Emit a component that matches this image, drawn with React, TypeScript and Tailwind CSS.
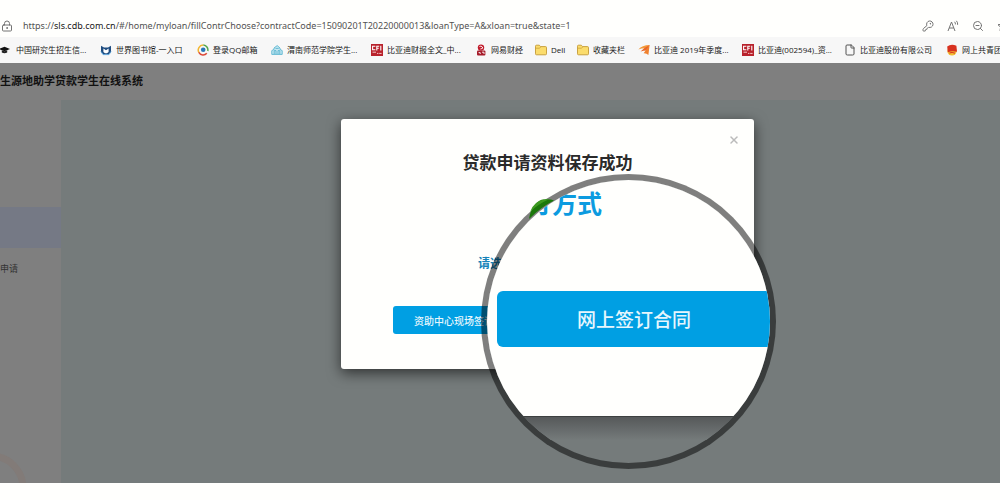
import React from "react";
import { LockKeyhole, KeyRound, ZoomOut, File, X } from "lucide-react";

const FolderIcon = () => (
  <svg viewBox="0 0 12 12" className="size-3 shrink-0" aria-hidden="true">
    <path d="M.5 2.2Q.5 1.2 1.5 1.2H4.3L5.6 2.6H10.5Q11.5 2.6 11.5 3.6V9.8Q11.5 10.8 10.5 10.8H1.5Q.5 10.8.5 9.8Z" fill="#fbdc6c" stroke="#c49a34" strokeWidth=".9" />
    <path d="M1 4.2H4.6L5.8 2.8" fill="none" stroke="#c49a34" strokeWidth=".7" />
  </svg>
);

const CfiIcon = () => (
  <svg viewBox="0 0 12 12" className="size-3 shrink-0" aria-hidden="true">
    <rect width="12" height="12" fill="#b8222c" />
    <path d="M4.4 2.2H1.6V5.8H4.4M5.8 6.4V2.2H8.2M5.8 4.2H7.8M9.8 1.8V6.4" fill="none" stroke="#fff" strokeWidth="1.1" />
    <path d="M1.5 8.2H5M6 9.4H7.4M8.2 9.4H10.6" stroke="#f3c7c8" strokeWidth="1" />
  </svg>
);

const WolfIcon = () => (
  <svg viewBox="0 0 12 12" className="size-3 shrink-0" aria-hidden="true">
    <path d="M1 1.8 4 3.4H8L11 1.8V8.2L8.6 10.4H3.4L1 8.2Z" fill="#1e4c80" />
    <path d="M3.4 4.4 6 6.2 8.6 4.4V8L7 9.2H5L3.4 8Z" fill="#fff" />
    <path d="M1 7.4 3 10.6H9L11 7.4" fill="none" stroke="#62a7dc" strokeWidth="1" />
  </svg>
);

const MailIcon = () => (
  <svg viewBox="0 0 12 12" className="size-3 shrink-0" aria-hidden="true">
    <path d="M2 8.6A4.9 4.9 0 0 1 6.4 1.1" fill="none" stroke="#f2b632" strokeWidth="1.5" />
    <path d="M6.4 1.1A4.9 4.9 0 0 1 10.8 7" fill="none" stroke="#57a84e" strokeWidth="1.5" />
    <path d="M1.8 8.4A4.9 4.9 0 0 0 9.8 9.2" fill="none" stroke="#dc4938" strokeWidth="1.5" />
    <circle cx="6.2" cy="5.8" r="2.3" fill="#2878b8" />
  </svg>
);

const CampusIcon = () => (
  <svg viewBox="0 0 12 12" className="size-3 shrink-0" aria-hidden="true">
    <path d="M.8 10.4V6.6L3 5.4V4L6.2 1.6 9 4V5.4L11.2 6.6V10.4Z" fill="#c7e8f2" stroke="#58b4cf" strokeWidth=".9" />
    <path d="M3.2 10V6.6H5V10M7 10V6.6H8.8V10M4.5 4.4H7.7" fill="none" stroke="#58b4cf" strokeWidth=".9" />
  </svg>
);

const NeteaseIcon = () => (
  <svg viewBox="0 0 12 12" className="size-3 shrink-0" aria-hidden="true">
    <circle cx="6" cy="3.6" r="3.2" fill="#c11b2b" />
    <rect x="2" y="6.4" width="8.4" height="5" rx="1" fill="#a61c2a" />
    <path d="M4.4 2.6Q6 1.4 7.4 3T5.4 5M3.6 8.6H5.2V10M7 8.2H9V10" fill="none" stroke="#fff" strokeWidth=".9" />
  </svg>
);

const SwiftIcon = () => (
  <svg viewBox="0 0 12 12" className="size-3 shrink-0" aria-hidden="true">
    <path d="M.4 5.4Q4 1.2 11.6 1L8.2 4.4Q4 4.2.4 5.4Z" fill="#f39a3a" />
    <path d="M2.6 7.6Q6 3.6 11.6 1L9 6.4Q6 6.2 2.6 7.6Z" fill="#e9662a" />
    <path d="M5.6 9.2 11.6 1 10.4 11Q8.6 9 5.6 9.2Z" fill="#f0812e" />
  </svg>
);

const LeagueIcon = () => (
  <svg viewBox="0 0 12 12" className="size-3 shrink-0" aria-hidden="true">
    <circle cx="6" cy="7" r="4.6" fill="#f3bd32" />
    <path d="M1.2 2.6Q5-.4 10.4 1.8L11 7.8Q6.4 6.4 1.8 8.2Z" fill="#d8311f" />
    <path d="M3.4 9Q6 7.8 9 9.2" fill="none" stroke="#d8311f" strokeWidth="1" />
  </svg>
);

const CapIcon = () => (
  <svg viewBox="0 0 12 12" className="size-3 shrink-0" aria-hidden="true">
    <path d="M-1 5 4.5 2.8 10 5 4.5 7.2Z" fill="#111" />
    <path d="M1.8 6.2V8.4Q4.5 10 7.2 8.4V6.2L4.5 7.2Z" fill="#222" />
  </svg>
);

const bookmarks = [
  { label: "中国研究生招生信...", icon: <CapIcon />, box: "w-[100px]" },
  { label: "世界图书馆-一入口", icon: <WolfIcon />, box: "w-[97px]" },
  { label: "登录QQ邮箱", icon: <MailIcon />, box: "w-[74px]" },
  { label: "渭南师范学院学生...", icon: <CampusIcon />, box: "w-[100px]" },
  { label: "比亚迪财报全文_中...", icon: <CfiIcon />, box: "w-[104px]" },
  { label: "网易财经", icon: <NeteaseIcon />, box: "w-[60px]" },
  { label: "Dell", icon: <FolderIcon />, box: "w-[42px]" },
  { label: "收藏夹栏", icon: <FolderIcon />, box: "w-[61px]" },
  { label: "比亚迪 2019年季度...", icon: <SwiftIcon />, box: "w-[104px]" },
  { label: "比亚迪(002594)_资...", icon: <CfiIcon />, box: "w-[102px]" },
  { label: "比亚迪股份有限公司", icon: <File className="size-3 shrink-0 text-neutral-600" />, box: "w-[102px]" },
  { label: "网上共青团", icon: <LeagueIcon />, box: "w-[72px]" },
];

function BrowserBar() {
  return (
    <header className="shrink-0 bg-[#fffffd]">
      <div className="flex h-[37px] items-end justify-between overflow-hidden pb-[3px] text-neutral-500">
        <div className="flex h-4 items-center">
          <LockKeyhole className="ml-px size-3" />
          <span className="ml-[10px] font-[Noto_Sans,sans-serif] text-[9px] leading-4 whitespace-nowrap text-neutral-600">
            https://<span className="text-neutral-900">sls.cdb.com.cn</span>
            /#/home/myloan/fillContrChoose?contractCode=15090201T20220000013&amp;loanType=A&amp;xloan=true&amp;state=1
          </span>
        </div>
        <div className="-mr-[9px] flex h-4 items-center gap-[13px]">
          <button aria-label="密码" className="shrink-0"><KeyRound className="size-3" /></button>
          <button aria-label="朗读此页内容" className="shrink-0">
            <svg viewBox="0 0 12 12" className="size-3" fill="none" stroke="currentColor" aria-hidden="true">
              <path d="M1 11 4.5 2 8 11M2.2 8H6.8M7.6 1.8Q8.6 3 8.4 4.4M9.4.8Q11 2.6 10.6 4.8" />
            </svg>
          </button>
          <button aria-label="缩小" className="shrink-0"><ZoomOut className="size-3" /></button>
          <button aria-label="收藏" className="shrink-0">
            <svg viewBox="0 0 12 12" className="size-3" fill="none" stroke="currentColor" aria-hidden="true">
              <path d="M6 1 7.5 4.3 11 4.7 8.4 7.2 9 10.8 6 9 3 10.8 3.6 7.2 1 4.7 4.5 4.3Z" />
            </svg>
          </button>
        </div>
      </div>
      <nav className="flex h-[26px] items-center overflow-hidden bg-[#f7f7f7] font-[Open_Sans,Noto_Sans_CJK_SC,sans-serif] text-[8px] text-neutral-900">
        {bookmarks.map((b) => (
          <a key={b.label} href="#" className={`flex shrink-0 items-center gap-1 whitespace-nowrap ${b.box}`}>
            {b.icon}
            {b.label}
          </a>
        ))}
      </nav>
    </header>
  );
}

function Lens() {
  return (
    <>
      <div className="absolute top-[55px] left-[140px] size-[295px] overflow-hidden rounded-full border-6 border-black/50 bg-[#757b7b] bg-clip-padding">
        <div className="flex h-[236px] flex-col bg-[#fffffd]">
          <p className="mt-[6px] ml-10 text-[25px] leading-8 font-bold whitespace-nowrap text-[#0c9be0]">订方式</p>
          <button className="mt-[73px] ml-[10px] h-14 w-[360px] rounded-md bg-[#009fe3] pl-20 text-left text-[19px] font-medium text-[#e6f6fd]">
            网上签订合同
          </button>
        </div>
        <div className="h-6 border-t border-[#3d4040] bg-linear-to-b from-[#56595a] to-[#757b7b]" />
      </div>
      <svg viewBox="0 0 26 20" className="absolute top-20 left-[188px] h-5 w-[26px]" aria-hidden="true">
        <path d="M0 20Q1 12 6 6T15 .5Q21-.5 25 1.5 12 8 0 20Z" fill="#1c780b" />
        <path d="M1 13Q5 2 15 .5L20 .2Q9 5 1 13Z" fill="#3d9a20" />
      </svg>
    </>
  );
}

export default function App() {
  return (
    <div className="flex min-h-screen flex-col overflow-hidden bg-[#fffffd] pb-[17px] font-[Noto_Sans_CJK_SC,sans-serif]">
      <BrowserBar />
      <div className="flex grow flex-col bg-[#7f7f7f]">
        <h1 className="h-[37px] font-[Liberation_Serif,Noto_Sans_CJK_SC,serif] text-[11px] leading-[37px] font-bold text-[#111]">
          生源地助学贷款学生在线系统
        </h1>
        <div className="flex grow">
          <aside className="flex w-[61px] shrink-0 flex-col overflow-hidden">
            <div className="mt-[107px] h-[41px] bg-[#757985]" />
            <a href="#" className="mt-[13px] text-[9px] leading-4 text-[#333]">申请</a>
            <svg viewBox="0 0 61 32" className="mt-auto h-8 w-full" aria-hidden="true">
              <circle cx="-9" cy="37" r="32" fill="none" stroke="#827b78" strokeWidth="7" />
            </svg>
          </aside>
          <main className="flex grow items-start justify-center bg-[#757b7b] pt-[19px] pl-[34px]">
            <section className="relative h-[250px] w-[413px] rounded-[3px] bg-[#fffffd] shadow-[0_4px_14px_rgba(0,0,0,0.6)]">
              <div className="flex justify-end pt-[15px] pr-[14px]">
                <button aria-label="关闭" className="text-[#bbb]"><X className="size-3" strokeWidth={3} /></button>
              </div>
              <h2 className="mt-1 text-center text-[17px] leading-6 font-bold text-[#2a2a2a]">贷款申请资料保存成功</h2>
              <p className="mt-[79px] pl-[137px] text-[12px] leading-5 font-bold text-[#1583b9]">请选择</p>
              <button className="mt-[33px] ml-[52px] h-7 w-[140px] rounded-[3px] bg-[#009fe3] pl-[21px] text-left text-[10px] font-medium whitespace-nowrap text-[#e6f6fd]">
                资助中心现场签订合同
              </button>
              <Lens />
            </section>
          </main>
        </div>
      </div>
    </div>
  );
}
